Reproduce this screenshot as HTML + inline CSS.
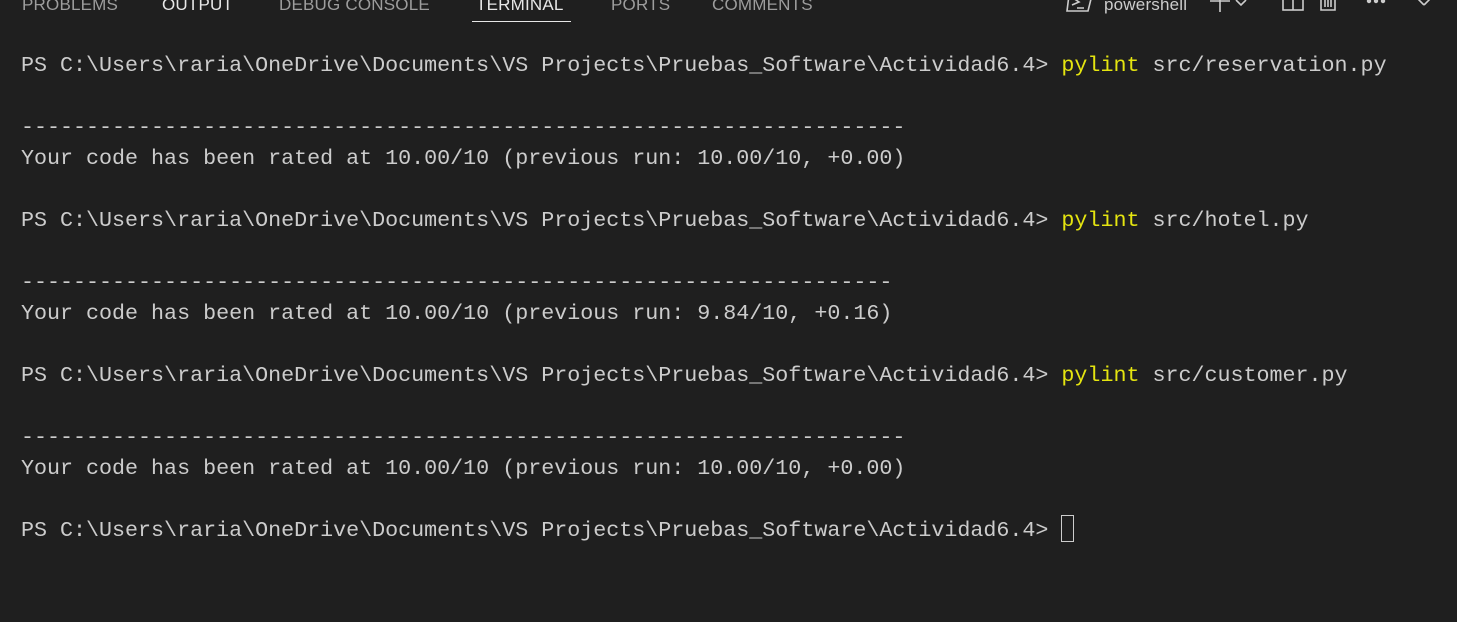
<!DOCTYPE html>
<html><head><meta charset="utf-8"><style>
html,body{margin:0;padding:0;background:#1f1f1f;width:1457px;height:622px;overflow:hidden}
.tab{position:absolute;top:-7px;font:17px "Liberation Sans",sans-serif;color:#9d9d9d;letter-spacing:0.2px;line-height:24px}
.term{position:absolute;left:21px;top:50px;font-family:"Liberation Mono",monospace;font-size:21.68px;line-height:31px;color:#cccccc;white-space:pre}
.y{color:#e5e510}
.cur{display:inline-block;width:11px;height:25px;border:1px solid #cccccc;vertical-align:-6px}
</style></head><body>
<div class="tab" style="left:22px">PROBLEMS</div>
<div class="tab" style="left:162px;color:#e7e7e7">OUTPUT</div>
<div class="tab" style="left:279px">DEBUG CONSOLE</div>
<div class="tab" style="left:476px;color:#e7e7e7">TERMINAL</div>
<div style="position:absolute;left:472px;top:21px;width:99px;height:1px;background:#e7e7e7"></div>
<div class="tab" style="left:611px">PORTS</div>
<div class="tab" style="left:712px">COMMENTS</div>
<svg style="position:absolute;left:1066px;top:-6px" width="28" height="20" viewBox="0 0 28 20" fill="none" stroke="#ccc" stroke-width="1.6"><path d="M3 1 L26 1 L22 17 L1 17 Z M7 4 L13 8 L6 11 M11 14 L18 14"/></svg>
<div class="tab" style="left:1104px;color:#ccc">powershell</div>
<svg style="position:absolute;left:1208px;top:-10px" width="250" height="24" viewBox="0 0 250 24" fill="none" stroke="#ccc" stroke-width="1.6"><path d="M2 11 H22 M12 2 V22 M28 10 L33 15 L38 10"/><rect x="75" y="4" width="20" height="16"/><path d="M85 4 V20"/><path d="M113 6 V20 H127 V6 M111 6 H129 M117 6 V17 M120 6 V17 M123 6 V17"/><circle cx="161" cy="11" r="1.4" fill="#ccc"/><circle cx="168" cy="11" r="1.4" fill="#ccc"/><circle cx="175" cy="11" r="1.4" fill="#ccc"/><path d="M207 6 L216 15 M225 6 L216 15"/></svg>
<div class="term">PS C:\Users\raria\OneDrive\Documents\VS Projects\Pruebas_Software\Actividad6.4&gt; <span class="y">pylint</span> src/reservation.py

--------------------------------------------------------------------
Your code has been rated at 10.00/10 (previous run: 10.00/10, +0.00)

PS C:\Users\raria\OneDrive\Documents\VS Projects\Pruebas_Software\Actividad6.4&gt; <span class="y">pylint</span> src/hotel.py

-------------------------------------------------------------------
Your code has been rated at 10.00/10 (previous run: 9.84/10, +0.16)

PS C:\Users\raria\OneDrive\Documents\VS Projects\Pruebas_Software\Actividad6.4&gt; <span class="y">pylint</span> src/customer.py

--------------------------------------------------------------------
Your code has been rated at 10.00/10 (previous run: 10.00/10, +0.00)

PS C:\Users\raria\OneDrive\Documents\VS Projects\Pruebas_Software\Actividad6.4&gt; <span class="cur"></span></div>
</body></html>
